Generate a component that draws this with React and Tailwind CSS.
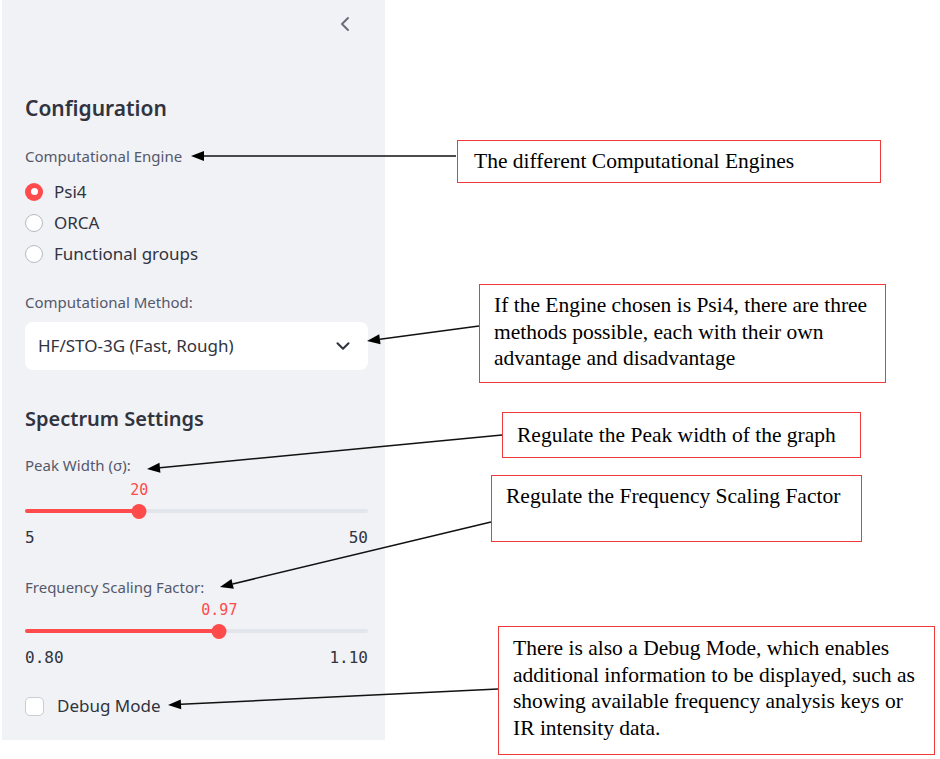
import { ChevronLeft, ChevronDown } from 'lucide-react';

const sans = 'font-["Noto_Sans","Open_Sans",sans-serif]';
const mono = 'font-["DejaVu_Sans_Mono","Liberation_Mono",monospace]';

function Radio({ label, checked }) {
  return (
    <div className="flex items-center h-[31px] gap-[11px]">
      {checked ? (
        <span className="w-[18px] h-[18px] rounded-full bg-[#ff4b4b] flex items-center justify-center">
          <span className="w-[7px] h-[7px] rounded-full bg-white" />
        </span>
      ) : (
        <span className="w-[18px] h-[18px] rounded-full bg-white border border-[#b8bac2]" />
      )}
      <span className="text-[17px] text-[#31333f]">{label}</span>
    </div>
  );
}

function Slider({ value, min, max, minLabel, maxLabel, display }) {
  const pct = ((value - min) / (max - min)) * 100;
  return (
    <div>
      <div className="relative h-[16px]">
        <span
          className={`absolute top-0 -translate-x-1/2 text-[15px] leading-[16px] text-[#ff4b4b] ${mono}`}
          style={{ left: `${pct}%` }}
        >
          {display}
        </span>
      </div>
      <div className="relative h-[16px] mt-[5px] flex items-center">
        <div className="w-full h-[4px] rounded-full bg-[#e2e5ec]" />
        <div className="absolute left-0 h-[4px] rounded-full bg-[#ff4b4b]" style={{ width: `${pct}%` }} />
        <div
          className="absolute w-[15px] h-[15px] rounded-full bg-[#ff4b4b] -translate-x-1/2"
          style={{ left: `${pct}%` }}
        />
      </div>
      <div className={`flex justify-between mt-[11px] h-[16px] text-[16px] leading-[16px] text-[#31333f] ${mono}`}>
        <span>{minLabel}</span>
        <span>{maxLabel}</span>
      </div>
    </div>
  );
}

function Note({ className, children }) {
  return (
    <div
      className={`absolute border-[1.5px] border-[#f03a3a] bg-white text-black text-[21.5px] leading-[26.5px] font-["Liberation_Serif","Times_New_Roman",serif] ${className}`}
    >
      {children}
    </div>
  );
}

function Arrow({ x1, y1, x2, y2 }) {
  const dx = x2 - x1;
  const dy = y2 - y1;
  const len = Math.hypot(dx, dy);
  const ux = dx / len;
  const uy = dy / len;
  const hl = 13;
  const hw = 5;
  const bx = x2 - ux * hl;
  const by = y2 - uy * hl;
  const pts = `${x2},${y2} ${bx - uy * hw},${by + ux * hw} ${bx + uy * hw},${by - ux * hw}`;
  return (
    <g>
      <line x1={x1} y1={y1} x2={bx} y2={by} stroke="#111" strokeWidth="1.5" />
      <polygon points={pts} fill="#000" />
    </g>
  );
}

export default function App() {
  return (
    <div className={`relative w-[940px] h-[759px] bg-white overflow-hidden ${sans}`}>
      <aside className="ml-[2px] w-[383px] h-[740px] bg-[#f0f2f6] pl-[23px] pr-[17px] pt-[17px]">
        <div className="flex justify-end h-[14px] pr-[11px]">
          <ChevronLeft className="w-[24px] h-[24px] -mt-[5px] text-[#6b6e7a]" strokeWidth={2} />
        </div>

        <h2 className="mt-[63px] h-[28px] text-[21px] leading-[28px] font-semibold text-[#31333f]">
          Configuration
        </h2>

        <div className="mt-[24px] h-[20px] text-[15px] leading-[20px] text-[#55586a]">
          Computational Engine
        </div>
        <div className="mt-[10px]">
          <Radio label="Psi4" checked />
          <Radio label="ORCA" />
          <Radio label="Functional groups" />
        </div>

        <div className="mt-[23px] h-[20px] text-[15px] leading-[20px] text-[#55586a]">
          Computational Method:
        </div>
        <div className="mt-[10px] h-[48px] rounded-[8px] bg-white flex items-center justify-between pl-[13px] pr-[14px]">
          <span className="text-[17px] text-[#31333f]">HF/STO-3G (Fast, Rough)</span>
          <ChevronDown className="w-[22px] h-[22px] text-[#31333f]" strokeWidth={2.25} />
        </div>

        <h2 className="mt-[35px] h-[28px] text-[20px] leading-[28px] font-semibold text-[#31333f]">
          Spectrum Settings
        </h2>

        <div className="mt-[22px] h-[20px] text-[15px] leading-[20px] text-[#55586a]">
          Peak Width (σ):
        </div>
        <div className="mt-[7px]">
          <Slider value={20} min={5} max={50} minLabel="5" maxLabel="50" display="20" />
        </div>

        <div className="mt-[31px] h-[20px] text-[15px] leading-[20px] text-[#55586a]">
          Frequency Scaling Factor:
        </div>
        <div className="mt-[5px]">
          <Slider value={0.97} min={0.8} max={1.1} minLabel="0.80" maxLabel="1.10" display="0.97" />
        </div>

        <div className="mt-[30px] h-[20px] flex items-center gap-[13px]">
          <span className="w-[19px] h-[19px] rounded-[5px] bg-white border border-[#c9ccd4]" />
          <span className="text-[17px] text-[#31333f]">Debug Mode</span>
        </div>
      </aside>

      <Note className="left-[457px] top-[140px] w-[424px] h-[43px] pl-[16px] pt-[7px]">
        The different Computational Engines
      </Note>
      <Note className="left-[479px] top-[284px] w-[407px] h-[99px] pl-[14px] pt-[7px]">
        If the Engine chosen is Psi4, there are three
        <br />
        methods possible, each with their own
        <br />
        advantage and disadvantage
      </Note>
      <Note className="left-[502px] top-[412px] w-[359px] h-[46px] pl-[14px] pt-[9px]">
        Regulate the Peak width of the graph
      </Note>
      <Note className="left-[491px] top-[475px] w-[371px] h-[67px] pl-[14px] pt-[7px]">
        Regulate the Frequency Scaling Factor
      </Note>
      <Note className="left-[498px] top-[626px] w-[437px] h-[129px] pl-[14px] pt-[8px]">
        There is also a Debug Mode, which enables
        <br />
        additional information to be displayed, such as
        <br />
        showing available frequency analysis keys or
        <br />
        IR intensity data.
      </Note>

      <svg className="absolute inset-0 pointer-events-none" width="940" height="759">
        <Arrow x1={456} y1={156} x2={191} y2={156} />
        <Arrow x1={479} y1={326} x2={367} y2={341} />
        <Arrow x1={502} y1={435} x2={147} y2={469} />
        <Arrow x1={491} y1={522} x2={220} y2={587} />
        <Arrow x1={498} y1={689} x2={168} y2={705} />
      </svg>
    </div>
  );
}
